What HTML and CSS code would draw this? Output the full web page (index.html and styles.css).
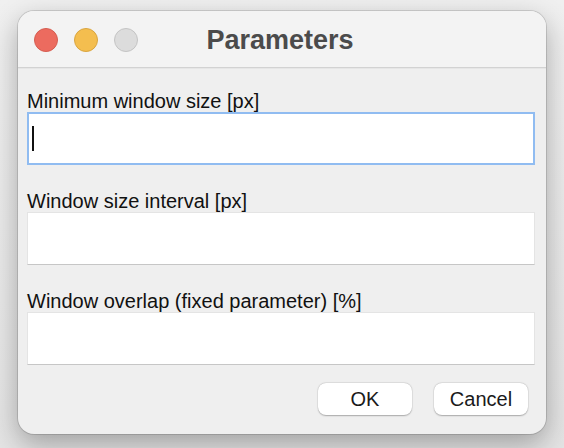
FILE: index.html
```html
<!DOCTYPE html>
<html>
<head>
<meta charset="utf-8">
<link rel="stylesheet" href="styles.css">
</head>
<body>
<div class="window">
  <div class="titlebar">
    <div class="lights">
      <span class="light red"></span>
      <span class="light yellow"></span>
      <span class="light grey"></span>
    </div>
    <div class="title">Parameters</div>
    <div class="spacer"></div>
  </div>
  <div class="content">
    <div class="field">
      <div class="label">Minimum window size [px]</div>
      <div class="input focused"><span class="caret"></span></div>
    </div>
    <div class="field">
      <div class="label">Window size interval [px]</div>
      <div class="input"></div>
    </div>
    <div class="field">
      <div class="label">Window overlap (fixed parameter) [%]</div>
      <div class="input"></div>
    </div>
    <div class="buttons">
      <div class="btn">OK</div>
      <div class="btn">Cancel</div>
    </div>
  </div>
</div>
</body>
</html>
```

FILE: styles.css
```css
html, body {
  margin: 0;
  padding: 0;
}
body {
  width: 564px;
  height: 448px;
  overflow: hidden;
  background: linear-gradient(#f0f0f0, #e4e4e4);
  font-family: "Liberation Sans", Arial, sans-serif;
  padding-top: 11px;
  padding-left: 18px;
  box-sizing: border-box;
}
.window {
  width: 528px;
  height: 423px;
  box-sizing: border-box;
  border-radius: 16px;
  background: #efefef;
  box-shadow: 0 0 0 1px rgba(0,0,0,0.13), 0 10px 28px rgba(0,0,0,0.3);
  overflow: hidden;
  display: flex;
  flex-direction: column;
}
.titlebar {
  height: 56px;
  flex: none;
  background: #f3f3f3;
  border-bottom: 1px solid #d2d2d2;
  box-shadow: 0 1px 0 #e6e6e6;
  display: grid;
  grid-template-columns: 1fr auto 1fr;
  align-items: center;
  padding: 0 16px;
  box-sizing: content-box;
}
.lights {
  display: flex;
  gap: 16px;
  align-items: center;
  padding-top: 2px;
}
.light {
  width: 22px;
  height: 22px;
  border-radius: 50%;
  border: 1px solid;
}
.red { background: #ec6b5f; border-color: #d55d51; }
.yellow { background: #f4be4f; border-color: #d9a540; }
.grey { background: #dcdcdc; border-color: #c4c4c4; }
.title {
  font-size: 27px;
  font-weight: bold;
  color: #4b4b4b;
  line-height: 30px;
  padding-top: 2px;
  padding-right: 4px;
}
.content {
  padding: 22px 11px 0 9px;
  display: flex;
  flex-direction: column;
}
.field {
  display: flex;
  flex-direction: column;
  margin-bottom: 25px;
  flex: none;
}
.label {
  font-size: 20px;
  line-height: 22px;
  color: #111;
}
.input {
  height: 53px;
  flex: none;
  box-sizing: border-box;
  background: #fff;
  border: 1px solid #e4e4e4;
  border-bottom-color: #c6c6c6;
  display: flex;
  align-items: center;
  padding-left: 4px;
}
.input.focused {
  border: 2px solid #90bcf1;
  padding-left: 3px;
}
.caret {
  width: 2px;
  height: 25px;
  background: #111;
}
.buttons {
  display: flex;
  justify-content: flex-end;
  gap: 22px;
  margin-top: -7px;
  padding-right: 7px;
}
.btn {
  width: 94px;
  height: 32px;
  border-radius: 8px;
  background: #fff;
  box-shadow: 0 0.5px 1.5px rgba(0,0,0,0.28), 0 0 0 0.5px rgba(0,0,0,0.06);
  font-size: 20px;
  line-height: 32px;
  text-align: center;
  color: #1a1a1a;
}
```
